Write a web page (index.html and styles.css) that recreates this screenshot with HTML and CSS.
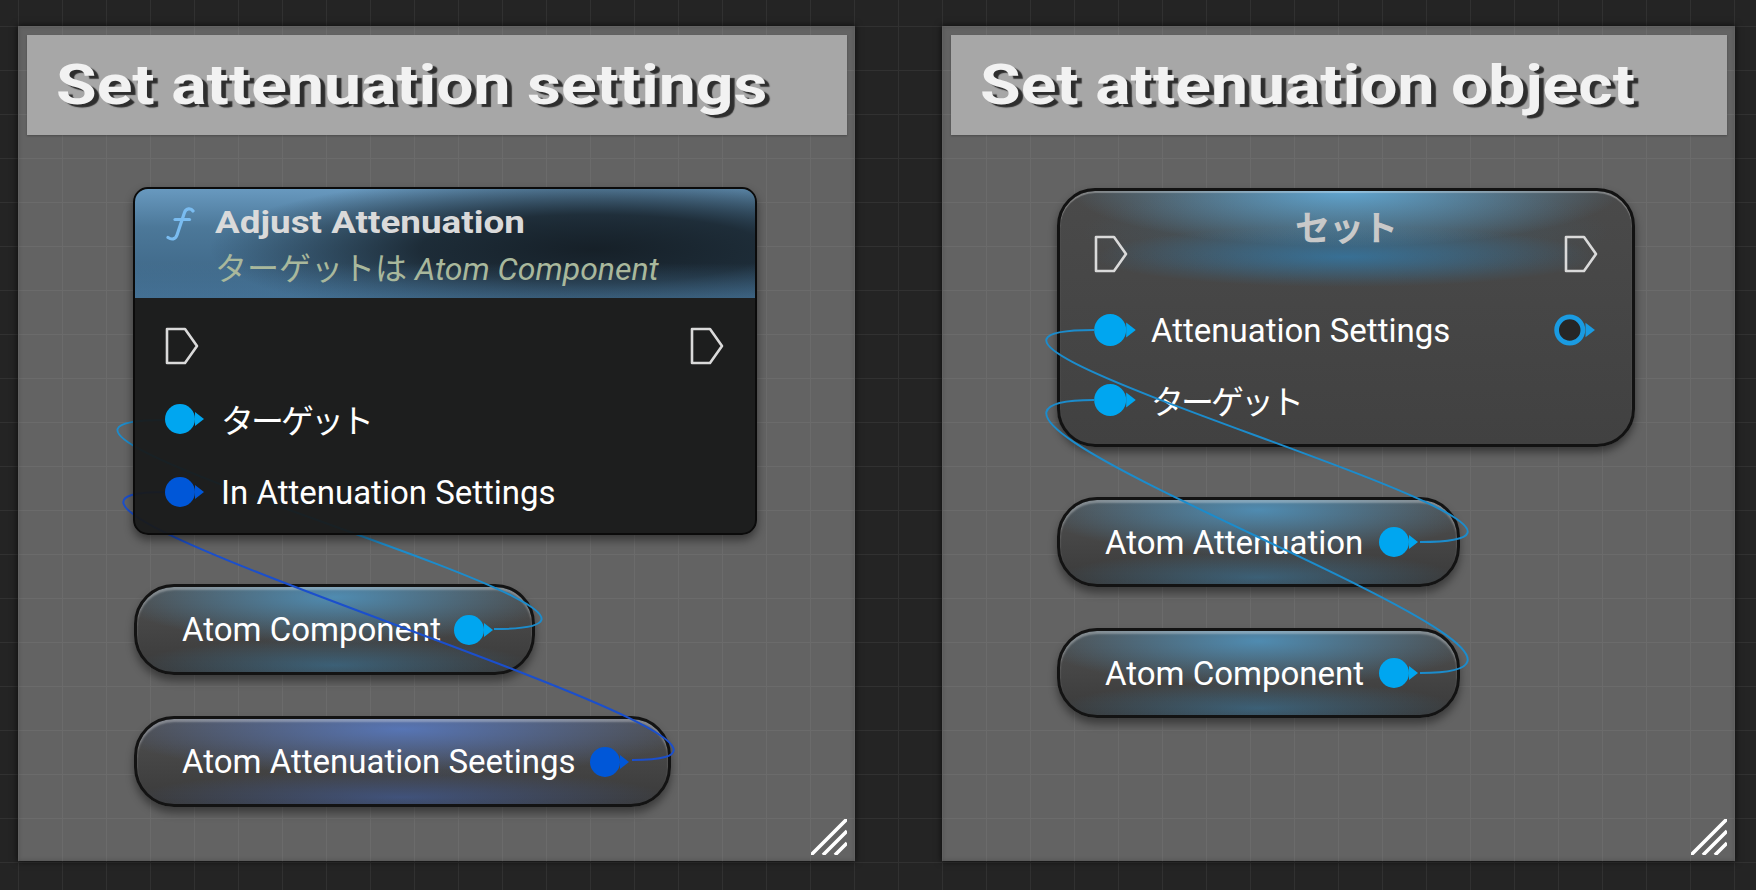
FILE: index.html
```html
<!DOCTYPE html>
<html lang="ja">
<head>
    <meta charset="UTF-8">
    <meta name="viewport" content="width=device-width, initial-scale=1.0">
    <title>Atom Attenuation</title>
    <link rel="stylesheet" href="styles.css">
</head>
<body>

<div class="canvas">

    <!-- left comment box -->
    <section class="comment comment-left">
        <div class="comment-title"><span class="stretch">Set attenuation settings</span></div>

        <div class="node fn-node">
            <div class="fn-head">
                <svg class="fn-icon" viewBox="0 0 30 34"><path d="M28 4 C26 1 21 1 19.5 5.5 L12 28 C10.5 32.5 6.5 33 3 30.5"/><path d="M10 12.5 H24.5"/></svg>
                <div class="fn-text">
                    <div class="fn-title"><span class="stretch">Adjust Attenuation</span></div>
                    <div class="fn-sub">ターゲットは <i>Atom Component</i></div>
                </div>
            </div>
            <div class="fn-body">
                <div class="row exec-row">
                    <svg class="exec" viewBox="0 0 34 38"><path d="M2 2 H20 L32 19 L20 36 H2 Z"/></svg>
                    <svg class="exec" viewBox="0 0 34 38"><path d="M2 2 H20 L32 19 L20 36 H2 Z"/></svg>
                </div>
                <div class="row">
                    <svg class="pin pin-obj" viewBox="0 0 40 30"><circle cx="15" cy="15" r="15"/><path d="M30 8 L39 15 L30 22 Z"/></svg>
                    <span class="label jp">ターゲット</span>
                </div>
                <div class="row">
                    <svg class="pin pin-struct" viewBox="0 0 40 30"><circle cx="15" cy="15" r="15"/><path d="M30 8 L39 15 L30 22 Z"/></svg>
                    <span class="label">In Attenuation Settings</span>
                </div>
            </div>
        </div>

        <div class="node var var-a">
            <span class="label">Atom Component</span>
            <svg class="pin pin-obj" viewBox="0 0 40 30"><circle cx="15" cy="15" r="15"/><path d="M30 8 L39 15 L30 22 Z"/></svg>
        </div>

        <div class="node var var-b var-struct">
            <span class="label">Atom Attenuation Seetings</span>
            <svg class="pin pin-struct" viewBox="0 0 40 30"><circle cx="15" cy="15" r="15"/><path d="M30 8 L39 15 L30 22 Z"/></svg>
        </div>

        <svg class="wires" width="837" height="835">
            <path class="wire-obj" d="M476 603 C726 603 -103 394 147 394"/>
            <path class="wire-struct" d="M614 734 C864 734 -103 466 147 466"/>
        </svg>

        <svg class="grip" viewBox="0 0 36 36"><path d="M0 36 L36 0 M12 36 L36 12 M24 36 L36 24"/></svg>
    </section>

    <!-- right comment box -->
    <section class="comment comment-right">
        <div class="comment-title"><span class="stretch">Set attenuation object</span></div>

        <div class="node set-node">
            <div class="set-head">
                <svg class="exec" viewBox="0 0 34 38"><path d="M2 2 H20 L32 19 L20 36 H2 Z"/></svg>
                <span class="set-title">セット</span>
                <svg class="exec" viewBox="0 0 34 38"><path d="M2 2 H20 L32 19 L20 36 H2 Z"/></svg>
            </div>
            <div class="set-row first">
                <svg class="pin pin-obj pin-lg" viewBox="0 0 40 30"><circle cx="15" cy="15" r="15"/><path d="M30 8 L39 15 L30 22 Z"/></svg>
                <span class="label">Attenuation Settings</span>
                <svg class="pin pin-out" viewBox="0 0 40 30"><circle cx="15" cy="15" r="12.5"/><path d="M30 8 L39 15 L30 22 Z"/></svg>
            </div>
            <div class="set-row">
                <svg class="pin pin-obj pin-lg" viewBox="0 0 40 30"><circle cx="15" cy="15" r="15"/><path d="M30 8 L39 15 L30 22 Z"/></svg>
                <span class="label jp">ターゲット</span>
            </div>
        </div>

        <div class="node var var-c">
            <span class="label">Atom Attenuation</span>
            <svg class="pin pin-obj" viewBox="0 0 40 30"><circle cx="15" cy="15" r="15"/><path d="M30 8 L39 15 L30 22 Z"/></svg>
        </div>

        <div class="node var var-d">
            <span class="label">Atom Component</span>
            <svg class="pin pin-obj" viewBox="0 0 40 30"><circle cx="15" cy="15" r="15"/><path d="M30 8 L39 15 L30 22 Z"/></svg>
        </div>

        <svg class="wires" width="793" height="835">
            <path class="wire-obj" d="M478 516 C728 516 -98 304 152 304"/>
            <path class="wire-obj" d="M478 647 C728 647 -98 374 152 374"/>
        </svg>

        <svg class="grip" viewBox="0 0 36 36"><path d="M0 36 L36 0 M12 36 L36 12 M24 36 L36 24"/></svg>
    </section>

</div>

</body>
</html>
```

FILE: styles.css
```css
* {
    box-sizing: border-box;
}

body {
    margin: 0;
    height: 890px;
    overflow: hidden;
    font-family: Roboto, "Noto Sans CJK JP", sans-serif;
    background-color: #242424;
    background-image:
        linear-gradient(to right, #313131 1px, transparent 1px),
        linear-gradient(to bottom, #313131 1px, transparent 1px);
    background-size: 44px 44px;
    background-position: 18px 26px;
}

.canvas {
    display: flex;
    gap: 87px;
    padding: 26px 0 0 18px;
}

/* the editor font is wider than Roboto, so stretch the bold headings */
.stretch {
    display: inline-block;
    transform: scaleX(1.18);
    transform-origin: 0 50%;
}

.jp {
    letter-spacing: -3px;
}

/* comment boxes */
.comment {
    position: relative;
    height: 835px;
    padding: 9px 8px 0 9px;
    background-color: #636363;
    background-image:
        linear-gradient(to right, #6b6b6b 1px, transparent 1px),
        linear-gradient(to bottom, #6b6b6b 1px, transparent 1px);
    background-size: 44px 44px;
    box-shadow: 0 0 6px 1px rgba(0, 0, 0, 0.55), inset 0 0 5px rgba(0, 0, 0, 0.2);
}

.comment-left {
    width: 837px;
}

.comment-right {
    width: 793px;
}

.comment-title {
    height: 100px;
    padding-left: 29px;
    background: #a7a7a7;
    box-shadow: 0 1px 2px rgba(0, 0, 0, 0.25);
    color: #f2f2f2;
    font-size: 56px;
    font-weight: 700;
    line-height: 100px;
    white-space: nowrap;
    text-shadow: 4px 3px 1px #2e2e2e;
}

.grip {
    position: absolute;
    right: 8px;
    bottom: 6px;
    width: 36px;
    height: 36px;
}

.grip path {
    stroke: #fff;
    stroke-width: 3.6;
}

/* wires */
.wires {
    position: absolute;
    left: 0;
    top: 0;
    z-index: 2;
    pointer-events: none;
}

.wires path {
    fill: none;
    stroke-width: 2;
}

.wire-obj {
    stroke: #1c8ccc;
}

.wire-struct {
    stroke: #1b4fcc;
}

/* nodes */
.node {
    position: absolute;
    z-index: 1;
    color: #fff;
}

.label {
    font-size: 33px;
    white-space: nowrap;
}

.pin {
    width: 40px;
    height: 30px;
    flex: none;
}

.pin-obj {
    fill: #00a6f0;
}

.pin-struct {
    fill: #0057d8;
}

.pin-lg {
    width: 43px;
    height: 32px;
}

.pin-out {
    width: 42px;
    height: 32px;
}

.pin-out circle {
    fill: #262626;
    stroke: #1a9be2;
    stroke-width: 4.5;
}

.pin-out path {
    fill: #1a9be2;
}

.exec {
    width: 34px;
    height: 38px;
    flex: none;
}

.exec path {
    fill: none;
    stroke: #dadada;
    stroke-width: 2.6;
    stroke-linejoin: round;
}

/* function node sits above the wires, its body lets them show faintly */
.fn-node {
    z-index: 3;
    left: 115px;
    top: 161px;
    width: 624px;
    height: 348px;
    border: 2px solid #0b0b0b;
    border-radius: 15px;
    background: rgba(24, 26, 25, 0.94);
    box-shadow: 0 5px 10px rgba(0, 0, 0, 0.45);
    overflow: hidden;
}

.fn-head {
    display: flex;
    align-items: flex-start;
    height: 109px;
    padding: 13px 0 0 28px;
    background:
        linear-gradient(180deg, rgba(90, 140, 180, 0) 68%, rgba(80, 130, 170, 0.45) 100%),
        radial-gradient(ellipse 62% 70% at 74% 55%, rgba(22, 32, 40, 1) 0%, rgba(22, 32, 40, 0.85) 45%, rgba(22, 32, 40, 0) 100%),
        linear-gradient(180deg, #6899bf 0%, #4c7899 35%, #3a6282 100%);
}

.fn-icon {
    flex: none;
    width: 30px;
    height: 34px;
    margin: 5px 20px 0 2px;
}

.fn-icon path {
    fill: none;
    stroke: #7abcf0;
    stroke-width: 3.2;
    stroke-linecap: round;
}

.fn-title {
    color: #dadada;
    font-size: 32px;
    font-weight: 700;
    line-height: 40px;
}

.fn-title .stretch {
    transform: scaleX(1.15);
}

.fn-sub {
    margin-top: 7px;
    color: #a9b89c;
    font-size: 32px;
    line-height: 40px;
    white-space: nowrap;
}

.fn-body {
    padding: 12px 31px 0 30px;
}

.row {
    display: flex;
    align-items: center;
    height: 72px;
    margin-bottom: 1px;
}

.exec-row {
    justify-content: space-between;
}

.row .label {
    margin-left: 16px;
}

/* set node */
.set-node {
    left: 115px;
    top: 162px;
    width: 578px;
    height: 259px;
    border: 3px solid #121212;
    border-radius: 38px;
    background:
        radial-gradient(ellipse 48% 22% at 50% 0%, rgba(100, 180, 230, 0.85), rgba(100, 180, 230, 0) 100%),
        radial-gradient(ellipse 44% 12% at 50% 26%, rgba(50, 125, 175, 0.7), rgba(50, 125, 175, 0) 100%),
        radial-gradient(ellipse 46% 20% at 50% 16%, rgba(60, 110, 140, 0.45), rgba(60, 110, 140, 0) 100%),
        linear-gradient(#4a4a4a, #414141);
    box-shadow: inset 0 2px 1px rgba(255, 255, 255, 0.3), 0 5px 9px rgba(0, 0, 0, 0.45);
}

.set-head {
    display: flex;
    justify-content: space-between;
    align-items: flex-start;
    padding: 19px 34px 0 34px;
    height: 82px;
}

.set-head .exec {
    margin-top: 25px;
}

.set-title {
    color: #c9c9c9;
    font-size: 35px;
    font-weight: 700;
    line-height: 40px;
    letter-spacing: -1px;
}

.set-row {
    display: flex;
    align-items: center;
    height: 64px;
    margin-top: 6px;
    padding: 0 36px 0 34px;
}

.set-row.first {
    margin-top: 25px;
}

.set-row .label {
    margin-left: 14px;
}

.set-row .pin-out {
    margin-left: auto;
}

/* variable getter nodes */
.var {
    display: flex;
    align-items: center;
    height: 91px;
    padding: 0 38px 0 45px;
    border: 3px solid #131313;
    border-radius: 40px;
    background:
        radial-gradient(ellipse 55% 55% at 50% 12%, rgba(80, 160, 210, 0.75), rgba(80, 160, 210, 0) 100%),
        radial-gradient(ellipse 50% 32% at 50% 92%, rgba(60, 140, 190, 0.45), rgba(60, 140, 190, 0) 100%),
        linear-gradient(#505050, #3a3a3a);
    box-shadow: inset 0 3px 2px rgba(255, 255, 255, 0.3), 0 6px 8px rgba(0, 0, 0, 0.4);
}

.var-struct {
    background:
        radial-gradient(ellipse 55% 55% at 50% 12%, rgba(90, 130, 215, 0.75), rgba(90, 130, 215, 0) 100%),
        radial-gradient(ellipse 50% 32% at 50% 92%, rgba(70, 110, 200, 0.45), rgba(70, 110, 200, 0) 100%),
        linear-gradient(#505050, #3a3a3a);
}

.var .pin {
    margin-left: auto;
}

.var-a {
    left: 116px;
    top: 558px;
    width: 401px;
}

.var-b {
    left: 116px;
    top: 690px;
    width: 537px;
}

.var-c {
    left: 115px;
    top: 471px;
    width: 403px;
    height: 90px;
}

.var-d {
    left: 115px;
    top: 602px;
    width: 403px;
    height: 90px;
}
```
